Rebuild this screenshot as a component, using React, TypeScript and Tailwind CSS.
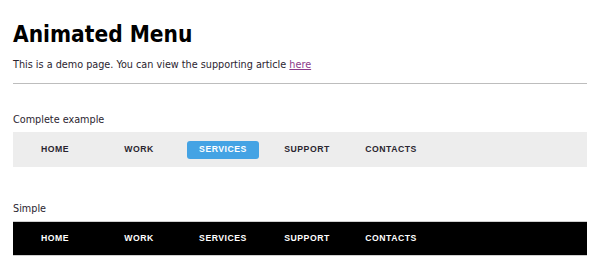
const items = ['HOME', 'WORK', 'SERVICES', 'SUPPORT', 'CONTACTS']

function Menu({ dark, active }: { dark?: boolean; active?: string }) {
  return (
    <nav
      className={
        dark
          ? 'flex h-[35px] items-center bg-black border-y border-[#cfcfcf]'
          : 'flex h-[35px] items-center bg-[#ededed]'
      }
    >
      {items.map((item) => (
        <div key={item} className="w-[84px] flex justify-center">
          <span
            className={
              item === active
                ? 'px-3 h-[18px] flex items-center rounded-[3px] bg-[#44a3e4] text-white'
                : dark
                  ? 'px-3 h-[18px] flex items-center text-white'
                  : 'px-3 h-[18px] flex items-center text-[#2a2530]'
            }
          >
            <span className="font-['Liberation_Sans',sans-serif] font-bold text-[8.7px] tracking-[0.5px]">{item}</span>
          </span>
        </div>
      ))}
    </nav>
  )
}

export default function App() {
  return (
    <div className="bg-white min-h-[267px] px-[13px] pt-[19px] font-['DejaVu_Sans',sans-serif] text-[#2b2530]">
      <h1 className="font-['DejaVu_Sans_Condensed','DejaVu_Sans',sans-serif] font-bold text-[22.5px] leading-[30px] text-black">
        Animated Menu
      </h1>
      <p className="mt-[9px] font-['DejaVu_Sans_Condensed','DejaVu_Sans',sans-serif] text-[10.75px] leading-[14px]">
        This is a demo page. You can view the supporting article{' '}
        <a href="#" className="text-[#8b3a8b] underline">
          here
        </a>
      </p>
      <hr className="mt-[11px] border-t border-[#bdbdbd]" />
      <p className="mt-[29px] font-['DejaVu_Sans_Condensed','DejaVu_Sans',sans-serif] text-[10.75px] leading-[14px]">
        Complete example
      </p>
      <div className="mt-[5px]">
        <Menu active="SERVICES" />
      </div>
      <p className="mt-[35px] font-['DejaVu_Sans_Condensed','DejaVu_Sans',sans-serif] text-[10.75px] leading-[14px]">
        Simple
      </p>
      <div className="mt-[5px]">
        <Menu dark />
      </div>
    </div>
  )
}
